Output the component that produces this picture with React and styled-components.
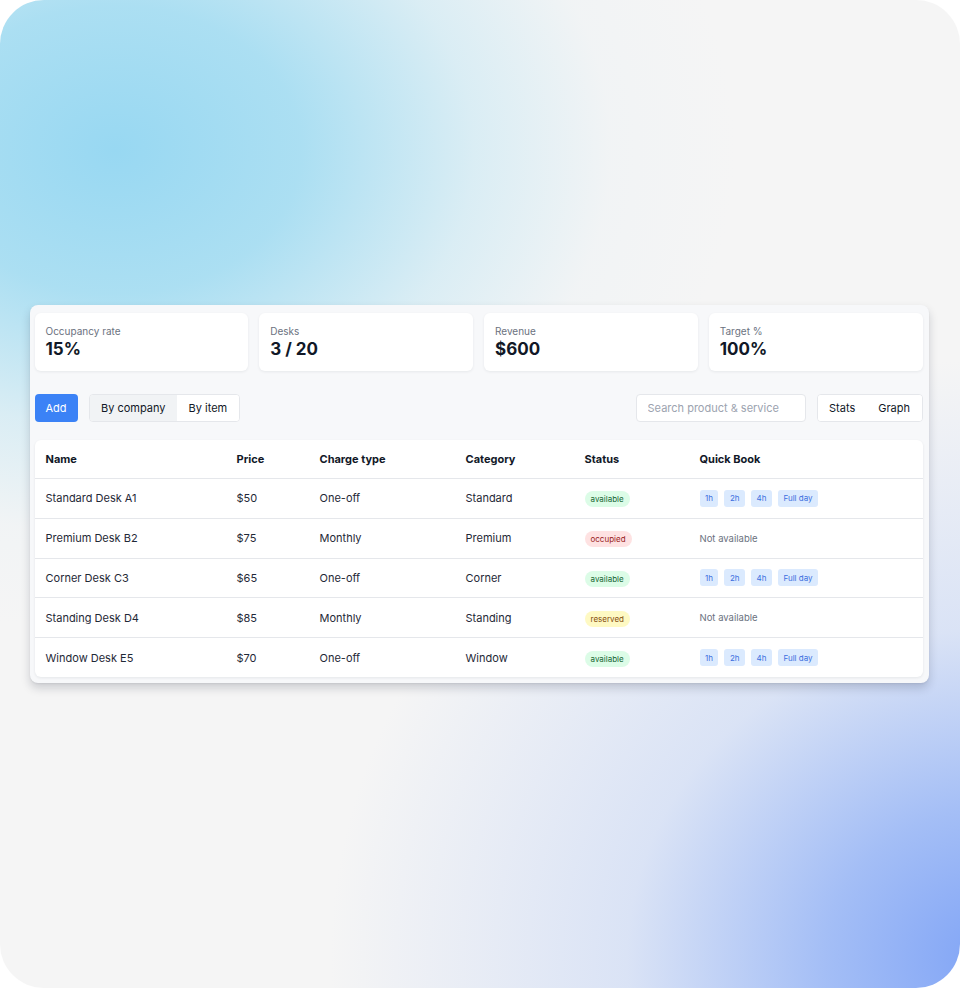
import styled, { createGlobalStyle } from "styled-components";

const GlobalStyle = createGlobalStyle`
  html, body {
    margin: 0;
    padding: 0;
    background: #ffffff;
  }
  body {
    font-family: Inter, "Noto Sans", sans-serif;
    color: #111827;
  }
`;

const stats = [
  { label: "Occupancy rate", value: "15%" },
  { label: "Desks", value: "3 / 20" },
  { label: "Revenue", value: "$600" },
  { label: "Target %", value: "100%" },
];

const desks = [
  { name: "Standard Desk A1", price: "$50", charge: "One-off", category: "Standard", status: "available" },
  { name: "Premium Desk B2", price: "$75", charge: "Monthly", category: "Premium", status: "occupied" },
  { name: "Corner Desk C3", price: "$65", charge: "One-off", category: "Corner", status: "available" },
  { name: "Standing Desk D4", price: "$85", charge: "Monthly", category: "Standing", status: "reserved" },
  { name: "Window Desk E5", price: "$70", charge: "One-off", category: "Window", status: "available" },
];

const slots = ["1h", "2h", "4h", "Full day"];

export default function App() {
  return (
    <>
      <GlobalStyle />
      <Canvas>
        <Panel>
          <StatRow>
            {stats.map((s) => (
              <StatCard key={s.label}>
                <StatLabel>{s.label}</StatLabel>
                <StatValue>{s.value}</StatValue>
              </StatCard>
            ))}
          </StatRow>

          <Toolbar>
            <Group>
              <AddButton>Add</AddButton>
              <Segmented>
                <Segment active>By company</Segment>
                <Segment>By item</Segment>
              </Segmented>
            </Group>
            <Group>
              <Search placeholder="Search product & service" />
              <Segmented>
                <Segment>Stats</Segment>
                <Segment>Graph</Segment>
              </Segmented>
            </Group>
          </Toolbar>

          <Table>
            <HeadRow>
              <HeadCell>Name</HeadCell>
              <HeadCell>Price</HeadCell>
              <HeadCell>Charge type</HeadCell>
              <HeadCell>Category</HeadCell>
              <HeadCell>Status</HeadCell>
              <HeadCell>Quick Book</HeadCell>
            </HeadRow>
            {desks.map((d) => (
              <Row key={d.name}>
                <Cell>{d.name}</Cell>
                <Cell>{d.price}</Cell>
                <Cell>{d.charge}</Cell>
                <Cell>{d.category}</Cell>
                <Cell>
                  <Badge status={d.status}>{d.status}</Badge>
                </Cell>
                <Cell>
                  {d.status === "available" ? (
                    <Chips>
                      {slots.map((s) => (
                        <Chip key={s}>{s}</Chip>
                      ))}
                    </Chips>
                  ) : (
                    <Muted>Not available</Muted>
                  )}
                </Cell>
              </Row>
            ))}
          </Table>
        </Panel>
      </Canvas>
    </>
  );
}

const Canvas = styled.div`
  width: 960px;
  height: 988px;
  box-sizing: border-box;
  border-radius: 44px;
  overflow: hidden;
  display: flex;
  align-items: center;
  justify-content: center;
  padding-right: 2px;
  background:
    radial-gradient(ellipse 620px 480px at 115px 150px, rgba(152, 216, 242, 1) 0%, rgba(165, 221, 242, 0.92) 30%, rgba(200, 232, 244, 0.6) 58%, rgba(230, 240, 245, 0.25) 80%, rgba(245, 245, 245, 0) 100%),
    radial-gradient(ellipse 660px 600px at 990px 960px, rgba(128, 164, 246, 1) 0%, rgba(155, 184, 246, 0.9) 25%, rgba(200, 215, 246, 0.6) 55%, rgba(245, 245, 245, 0) 100%),
    #f5f5f5;
`;

const Panel = styled.div`
  width: 899px;
  box-sizing: border-box;
  padding: 8px 6px 6px 5px;
  background: #f7f8fa;
  border-radius: 8px;
  box-shadow: 0 5px 10px rgba(15, 23, 42, 0.18), 0 1px 2px rgba(15, 23, 42, 0.06);
`;

const StatRow = styled.div`
  display: grid;
  grid-template-columns: repeat(4, 1fr);
  gap: 11px;
`;

const StatCard = styled.div`
  height: 58px;
  box-sizing: border-box;
  padding: 11px 11px 0;
  background: #ffffff;
  border-radius: 6px;
  box-shadow: 0 1px 3px rgba(15, 23, 42, 0.07);
`;

const StatLabel = styled.div`
  font-size: 10px;
  line-height: 14px;
  color: #6b7280;
`;

const StatValue = styled.div`
  font-size: 17px;
  line-height: 22px;
  font-weight: 700;
  color: #111827;
`;

const Toolbar = styled.div`
  display: flex;
  justify-content: space-between;
  align-items: center;
  margin-top: 23px;
`;

const Group = styled.div`
  display: flex;
  align-items: center;
  gap: 11px;
`;

const AddButton = styled.button`
  height: 28px;
  width: 43px;
  border: none;
  border-radius: 4px;
  background: #3b82f6;
  color: #ffffff;
  font-family: inherit;
  font-size: 11px;
  padding: 0;
`;

const Segmented = styled.div`
  display: flex;
  height: 28px;
  box-sizing: border-box;
  border: 1px solid #e5e7eb;
  border-radius: 4px;
  background: #ffffff;
  overflow: hidden;
`;

const Segment = styled.div`
  display: flex;
  align-items: center;
  padding: 0 11.5px;
  font-size: 11px;
  color: #111827;
  background: ${({ active }) => (active ? "#f1f3f5" : "#ffffff")};
`;

const Search = styled.input`
  width: 170px;
  height: 28px;
  box-sizing: border-box;
  border: 1px solid #e5e7eb;
  border-radius: 4px;
  padding: 0 11px;
  font-family: inherit;
  font-size: 11px;
  color: #111827;
  background: #ffffff;
  outline: none;

  &::placeholder {
    color: #9ca3af;
  }
`;

const Table = styled.div`
  margin-top: 18px;
  background: #ffffff;
  border-radius: 6px;
  box-shadow: 0 1px 3px rgba(15, 23, 42, 0.08);
  overflow: hidden;
`;

const columns = "191px 83px 146px 119px 115px 1fr";

const HeadRow = styled.div`
  display: grid;
  grid-template-columns: ${columns};
  height: 38px;
  align-items: center;
  border-bottom: 1px solid #e5e7eb;
`;

const HeadCell = styled.div`
  padding-left: 11px;
  font-size: 11px;
  font-weight: 700;
  color: #111827;
`;

const Row = styled.div`
  display: grid;
  grid-template-columns: ${columns};
  height: 38.8px;
  align-items: center;
  border-bottom: 1px solid #e5e7eb;

  &:last-child {
    border-bottom: none;
  }
`;

const Cell = styled.div`
  padding-left: 11px;
  font-size: 11px;
  color: #1f2937;
  display: flex;
  align-items: center;
`;

const badgeColors = {
  available: { bg: "#dcfce7", fg: "#166534" },
  occupied: { bg: "#fee2e2", fg: "#991b1b" },
  reserved: { bg: "#fef9c3", fg: "#854d0e" },
};

const Badge = styled.span`
  display: inline-flex;
  align-items: center;
  height: 16px;
  margin-top: 2px;
  padding: 0 6px;
  border-radius: 8px;
  font-size: 8px;
  background: ${({ status }) => badgeColors[status].bg};
  color: ${({ status }) => badgeColors[status].fg};
`;

const Chips = styled.div`
  display: flex;
  gap: 6px;
`;

const Chip = styled.span`
  display: inline-flex;
  align-items: center;
  height: 17px;
  padding: 0 5.5px;
  border-radius: 3px;
  background: #dbeafe;
  color: #3b6fe0;
  font-size: 8px;
`;

const Muted = styled.span`
  font-size: 9.5px;
  color: #6b7280;
`;
